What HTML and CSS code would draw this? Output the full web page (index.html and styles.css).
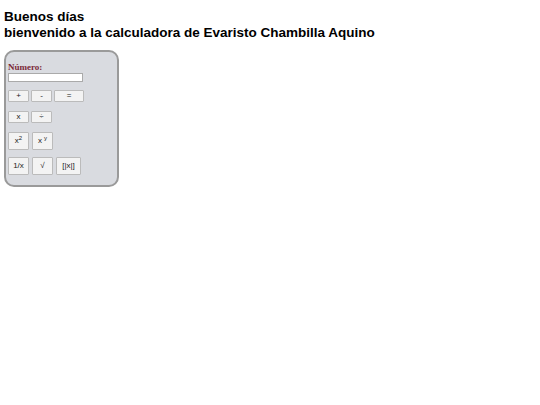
FILE: index.html
```html
<!DOCTYPE html>
<html lang="es">
<head>
<meta charset="utf-8">
<title>Calculadora</title>
<link rel="stylesheet" href="styles.css">
</head>
<body>
<h1 class="title">Buenos días<br>bienvenido a la calculadora de Evaristo Chambilla Aquino</h1>
<div class="calc">
  <label class="label" for="num">Número:</label>
  <input class="input" id="num" type="text">
  <div class="row r1">
    <button class="btn">+</button>
    <button class="btn">-</button>
    <button class="btn wide">=</button>
  </div>
  <div class="row r2">
    <button class="btn">x</button>
    <button class="btn">÷</button>
  </div>
  <div class="row r3">
    <button class="btn tall">x<sup>2</sup></button>
    <button class="btn tall">x <sup>y</sup></button>
  </div>
  <div class="row r4">
    <button class="btn tall">1/x</button>
    <button class="btn tall">√</button>
    <button class="btn tall abs">[|x|]</button>
  </div>
</div>
</body>
</html>
```
FILE: styles.css
```css
html, body { margin: 0; padding: 0; background: #fff; }
body { padding: 9px 4px; font-family: "Liberation Sans", Arial, sans-serif; }
.title { margin: 0; font-size: 13.5px; line-height: 16px; font-weight: bold; color: #000; }
.calc {
  margin-top: 9px;
  width: 115px;
  box-sizing: border-box;
  border: 2px solid #9a9a9a;
  border-radius: 10px;
  background: #d9dbe0;
  padding: 10px 2px 10px 2px;
  display: flex;
  flex-direction: column;
  align-items: flex-start;
}
.label { font-family: "Liberation Serif", serif; font-weight: bold; font-size: 9px; color: #7b2838; line-height: 10px; }
.input { margin: 1px 0 0 0; width: 75px; height: 9px; box-sizing: border-box; border: 1px solid #aaa; background: #fff; padding: 0; }
.row { display: flex; gap: 2px; }
.r1 { margin-top: 8px; }
.r2 { margin-top: 9px; }
.r3 { margin-top: 9px; gap: 3px; }
.r4 { margin-top: 7px; gap: 3px; }
.btn {
  width: 21px; height: 12px; padding: 0; margin: 0;
  border: 1px solid #bbb; background: #f3f3f3; border-radius: 1px;
  font-family: "Liberation Sans", Arial, sans-serif; font-size: 8px; color: #222; line-height: 10px;
}
.wide { width: 30px; }
.tall { height: 18px; }
.abs { width: 25px; }
sup { font-size: 6px; vertical-align: 3px; line-height: 0; }
```
